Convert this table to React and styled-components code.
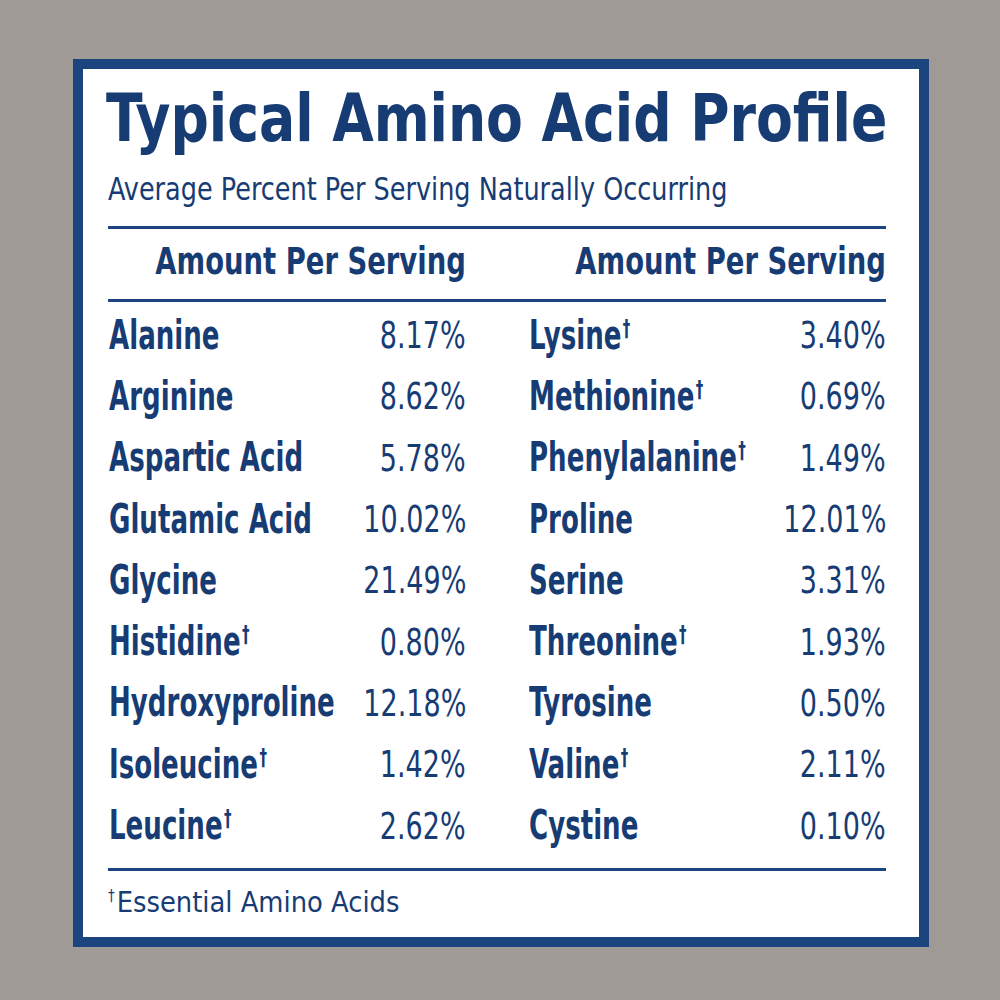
import React from "react";
import styled, { createGlobalStyle } from "styled-components";

const GlobalStyle = createGlobalStyle`
  html, body {
    margin: 0;
    padding: 0;
    background: #9f9a95;
  }
  body {
    font-family: "DejaVu Sans Condensed", "Liberation Sans Narrow", Roboto, sans-serif;
    color: #173c74;
  }
`;

const left = [
  ["Alanine", false, "8.17%"],
  ["Arginine", false, "8.62%"],
  ["Aspartic Acid", false, "5.78%"],
  ["Glutamic Acid", false, "10.02%"],
  ["Glycine", false, "21.49%"],
  ["Histidine", true, "0.80%"],
  ["Hydroxyproline", false, "12.18%"],
  ["Isoleucine", true, "1.42%"],
  ["Leucine", true, "2.62%"],
];

const right = [
  ["Lysine", true, "3.40%"],
  ["Methionine", true, "0.69%"],
  ["Phenylalanine", true, "1.49%"],
  ["Proline", false, "12.01%"],
  ["Serine", false, "3.31%"],
  ["Threonine", true, "1.93%"],
  ["Tyrosine", false, "0.50%"],
  ["Valine", true, "2.11%"],
  ["Cystine", false, "0.10%"],
];

const App = () => {
  const renderRows = (rows) => (
    <RowList>
      {rows.map(([name, essential, value]) => (
        <Row key={name}>
          <Name>
            <Squeeze $scale={0.725}>
              {name}
              {essential && <Dagger>†</Dagger>}
            </Squeeze>
          </Name>
          <Value>
            <Squeeze $scale={0.79} $origin="right">
              {value}
            </Squeeze>
          </Value>
        </Row>
      ))}
    </RowList>
  );

  return (
    <>
      <GlobalStyle />
      <Page>
        <Card>
          <Title>
            <Squeeze $scale={0.903}>Typical Amino Acid Profile</Squeeze>
          </Title>
          <Subtitle>
            <Squeeze $scale={0.887}>
              Average Percent Per Serving Naturally Occurring
            </Squeeze>
          </Subtitle>
          <Rule $gap={18} />
          <Grid>
            <HeadCell>
              <Squeeze $scale={0.824} $origin="right">
                Amount Per Serving
              </Squeeze>
            </HeadCell>
            <HeadCell>
              <Squeeze $scale={0.824} $origin="right">
                Amount Per Serving
              </Squeeze>
            </HeadCell>
          </Grid>
          <Rule />
          <Grid>
            {renderRows(left)}
            {renderRows(right)}
          </Grid>
          <Rule $gap={12} />
          <Footnote>
            <Squeeze $scale={0.99}>
              <FootDagger>†</FootDagger>Essential Amino Acids
            </Squeeze>
          </Footnote>
        </Card>
      </Page>
    </>
  );
};

export default App;

const Page = styled.div`
  width: 1000px;
  height: 1000px;
  box-sizing: border-box;
  padding: 59px 0 0 73px;
`;

const Card = styled.div`
  width: 856px;
  height: 888px;
  box-sizing: border-box;
  border: 10px solid #1c4580;
  background: #ffffff;
  padding: 0 33px 0 25px;
  display: flex;
  flex-direction: column;
`;

const Squeeze = styled.span`
  display: inline-block;
  white-space: nowrap;
  transform: scaleX(${({ $scale }) => $scale});
  transform-origin: ${({ $origin }) => $origin || "left"} center;
`;

const Title = styled.h1`
  margin: 12px 0 0 -2px;
  font-size: 66px;
  line-height: 76px;
  height: 76px;
  font-weight: 700;
  white-space: nowrap;
`;

const Subtitle = styled.div`
  margin-top: 13px;
  font-size: 32px;
  line-height: 38px;
  height: 38px;
  white-space: nowrap;
`;

const Rule = styled.div`
  height: 3px;
  background: #1c4580;
  margin-top: ${({ $gap }) => ($gap ? `${$gap}px` : "0")};
  flex-shrink: 0;
`;

const Grid = styled.div`
  display: grid;
  grid-template-columns: 358px 358px;
  column-gap: 62px;
`;

const HeadCell = styled.div`
  height: 70px;
  display: flex;
  justify-content: flex-end;
  font-size: 37px;
  font-weight: 700;
  line-height: 66px;
  white-space: nowrap;
`;

const RowList = styled.div`
  display: flex;
  flex-direction: column;
  padding-top: 2px;
`;

const Row = styled.div`
  height: 61.3px;
  display: grid;
  grid-template-columns: minmax(0, 1fr) auto;
  align-items: center;
  white-space: nowrap;
`;

const Name = styled.span`
  min-width: 0;
  font-size: 40px;
  font-weight: 700;
  padding-left: 1px;
`;

const Value = styled.span`
  font-size: 38px;
  font-weight: 400;
  padding-top: 1px;
  text-align: right;
`;

const Dagger = styled.span`
  font-size: 23px;
  font-weight: 700;
  position: relative;
  top: -13px;
  margin-left: 2px;
`;

const FootDagger = styled.span`
  font-size: 15px;
  position: relative;
  top: -11px;
  margin-right: 2px;
`;

const Footnote = styled.div`
  margin-top: 14px;
  font-size: 29px;
  line-height: 34px;
  height: 34px;
  white-space: nowrap;
`;
